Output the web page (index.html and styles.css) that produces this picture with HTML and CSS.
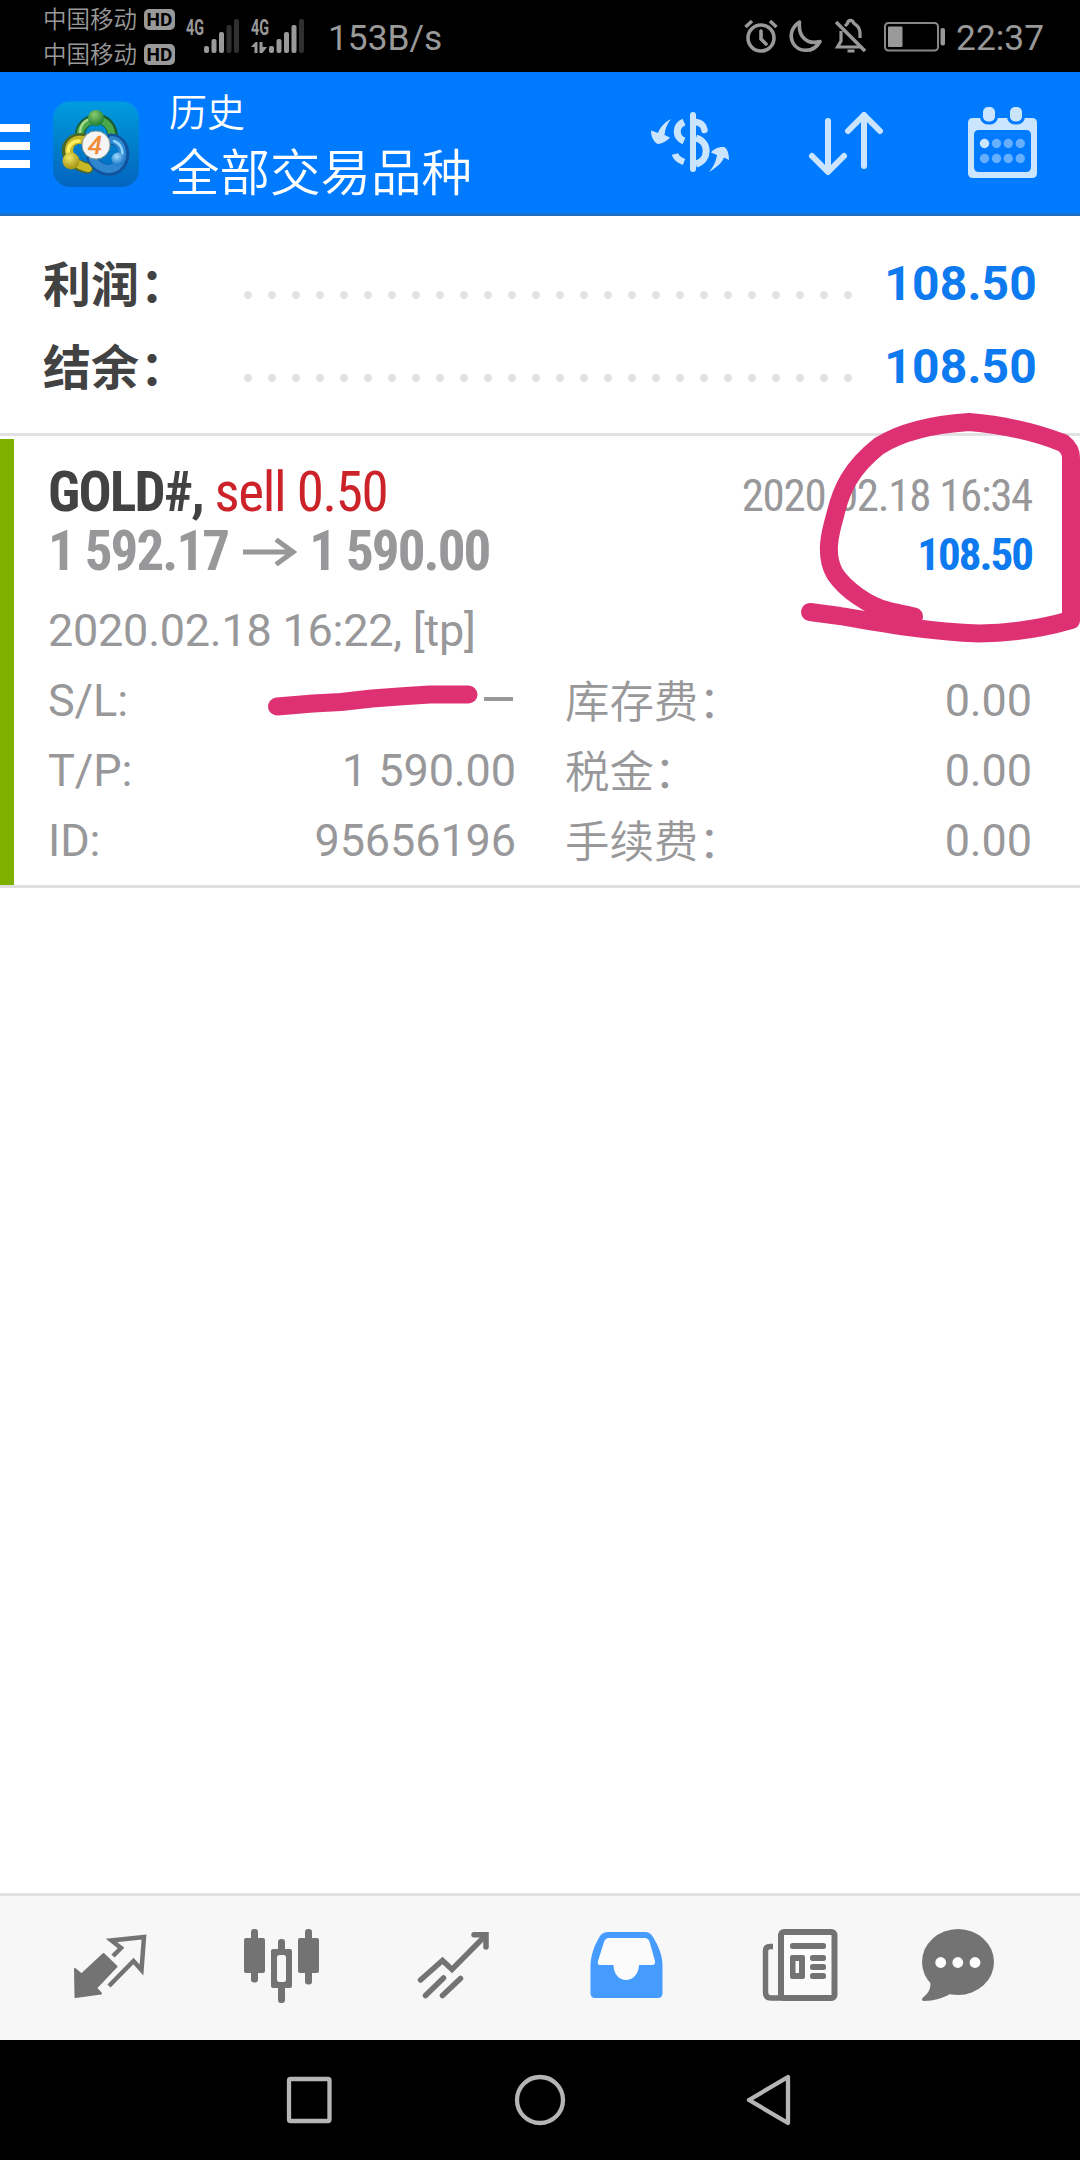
FILE: index.html
```html
<!DOCTYPE html>
<html lang="zh-CN">
<head>
    <meta charset="utf-8">
    <title>历史</title>
    <link rel="stylesheet" href="styles.css">
</head>

<body>
<div class="screen">
    <div class="status-bar">
        <div class="carriers">
            <div class="carrier">中国移动<span class="hd">HD</span></div>
            <div class="carrier">中国移动<span class="hd">HD</span></div>
        </div>
        <svg class="signal" width="56" height="48" viewBox="0 -6 56 48">
            <text class="net" x="1" y="17" textLength="18" lengthAdjust="spacingAndGlyphs">4G</text>
            <g fill="#999">
                <rect x="19" y="28" width="5" height="7" rx="2"/>
                <rect x="26.5" y="21" width="5" height="14" rx="2"/>
                <rect x="34" y="14" width="5" height="21" rx="2"/>
            </g>
            <g fill="#303030">
                <rect x="41.5" y="7" width="5" height="28" rx="2"/>
                <rect x="49" y="1" width="5" height="34" rx="2"/>
            </g>
        </svg>
        <svg class="signal" width="56" height="48" viewBox="0 -6 56 48">
            <text class="net" x="1" y="17" textLength="18" lengthAdjust="spacingAndGlyphs">4G</text>
            <path d="M1 29L5.500 24H7.500V35H4.500V29ZM9.500 24H12.500V29H17L12.500 35H9.500Z" fill="#999"/>
            <g fill="#999">
                <rect x="19" y="28" width="5" height="7" rx="2"/>
                <rect x="26.500" y="21" width="5" height="14" rx="2"/>
                <rect x="34" y="14" width="5" height="21" rx="2"/>
                <rect x="41.500" y="7" width="5" height="28" rx="2"/>
            </g>
            <rect x="49" y="1" width="5" height="34" rx="2" fill="#303030"/>
        </svg>
        <div class="speed">153B/s</div>
        <div class="status-right">
            <svg width="34" height="36" viewBox="0 0 34 36" fill="none" stroke="#999" stroke-width="3.600">
                <circle cx="17" cy="20" r="13"/>
                <path d="M17 13V21L22 26" stroke-linecap="round"/>
                <path d="M1.500 9L8 3M26 3L32.500 9"/>
            </svg>
            <svg width="34" height="36" viewBox="0 0 34 36" fill="none" stroke="#999" stroke-width="3.600" stroke-linejoin="round">
                <path d="M10.500 4C3 9 0 17 4 25C9 34 24 36 31 23.500C18 27 9 19 10.500 4Z"/>
            </svg>
            <svg width="34" height="36" viewBox="0 0 34 36" fill="none" stroke="#999" stroke-width="3.200">
                <path d="M7 13V23L3.500 29H27M11 8C13 6 14 6 14 3.500Q16.500 1.500 19 3.500C19 7 26 6 26 15V20"/>
                <path d="M2 4L31 33" stroke-width="3.600"/>
                <path d="M13.500 33H20.500" stroke-width="3"/>
            </svg>
            <svg width="62" height="36" viewBox="0 0 62 36">
                <rect x="1" y="5" width="53" height="27.500" rx="3.500" fill="none" stroke="#888" stroke-width="2"/>
                <rect x="4" y="8.500" width="14.500" height="20.500" rx="1" fill="#999"/>
                <rect x="56.500" y="10" width="4.500" height="17.500" rx="2" fill="#999"/>
            </svg>
            <div class="clock">22:37</div>
        </div>
    </div>

    <div class="header">
        <div class="menu"><i></i><i></i><i></i></div>
        <svg class="logo" width="88" height="88" viewBox="0 0 88 88">
            <defs>
                <linearGradient id="bg" x1="0" y1="0" x2="0" y2="1">
                    <stop offset="0" stop-color="#009ce0"/>
                    <stop offset="0.55" stop-color="#007cc9"/>
                    <stop offset="1" stop-color="#0464c0"/>
                </linearGradient>
                <radialGradient id="green" cx="0.4" cy="0.3" r="0.7">
                    <stop offset="0" stop-color="#8ccb70"/>
                    <stop offset="1" stop-color="#1d7d33"/>
                </radialGradient>
                <radialGradient id="yellow" cx="0.4" cy="0.3" r="0.7">
                    <stop offset="0" stop-color="#f3e566"/>
                    <stop offset="1" stop-color="#a0920e"/>
                </radialGradient>
                <radialGradient id="blue" cx="0.4" cy="0.3" r="0.7">
                    <stop offset="0" stop-color="#9fdcff"/>
                    <stop offset="1" stop-color="#1573c4"/>
                </radialGradient>
            </defs>
            <rect x="1" y="0.500" width="86" height="85.500" rx="17" fill="url(#bg)"/>
            <g fill="none" stroke-linecap="round">
                <path d="M28 37C25 15 62 8 61 39" stroke="#175d33" stroke-width="10"/>
                <path d="M28 36C26 16 61 10 60 38" stroke="#4aa84c" stroke-width="7"/>
                <path d="M28 33C28 20 37 17 43 18" stroke="#a5da8d" stroke-width="2.500"/>
                <path d="M32 38C12 34 6 62 36 67" stroke="#4b6a28" stroke-width="11"/>
                <path d="M31 39C13 36 10 61 36 67" stroke="#c9b825" stroke-width="8"/>
                <path d="M16 51C16 44 21 40 27 40" stroke="#fff060" stroke-width="3.500"/>
                <path d="M59 38C73 39 76 58 66 66C57 73 45 68 40 57" stroke="#12539d" stroke-width="11"/>
                <path d="M60 39C71 40 74 57 65 65C57 71 46 67 41 58" stroke="#2f86d0" stroke-width="8"/>
                <path d="M62 40C70 43 72 51 69 57" stroke="#92d5fa" stroke-width="2.500"/>
            </g>
            <circle cx="44" cy="17" r="8" fill="url(#green)"/>
            <circle cx="19" cy="60" r="8.500" fill="url(#yellow)"/>
            <circle cx="66" cy="58" r="6.500" fill="url(#blue)"/>
            <circle cx="44" cy="44" r="14" fill="#f5f5f5" stroke="#8b9b8f" stroke-width="1"/>
            <text class="logo-num" x="43" y="53">4</text>
        </svg>
        <div class="titles">
            <div class="title">历史</div>
            <div class="subtitle">全部交易品种</div>
        </div>
        <div class="actions">
            <svg width="100" height="80" viewBox="0 0 100 80">
                <g fill="none" stroke="#cce5ff">
                    <path d="M53 11V65" stroke-width="6" stroke-linecap="round"/>
                    <path d="M56 18C62 19 64 22 64.500 26" stroke-width="6.500" stroke-linecap="round"/>
                    <path d="M56 34C70 38 69 57 56 60" stroke-width="7"/>
                    <path d="M44 18C35 22 35 33 44 37" stroke-width="7"/>
                    <path d="M35 50C36 54 39 56 44 58" stroke-width="6.500"/>
                </g>
                <path d="M31 15C25 18 20 23 18 29L11 26.500C11 32 13 37 17.500 40C22 40 27 37 30 33.500L24.500 31C25 25 27 20 31 15ZM69 68C76 64 82 59 84 53.500L89 56C89 51 88 46 85 43.500C80 42 74 45 71 48.500L77 51C76 57 74 62 69 68Z" fill="#cce5ff"/>
            </svg>
            <svg width="100" height="80" viewBox="0 0 100 80" fill="none" stroke="#cce5ff" stroke-width="6" stroke-linecap="round" stroke-linejoin="round">
                <path d="M32 17V67M16 52L32 68L48 52"/>
                <path d="M68 62V11M52 27L68 11L84 27"/>
            </svg>
            <svg width="100" height="80" viewBox="0 0 100 80">
                <path d="M21 14H80Q85 14 85 19V69Q85 74 80 74H21Q16 74 16 69V19Q16 14 21 14ZM27 26Q22 26 22 31V63Q22 68 27 68H74Q79 68 79 63V31Q79 26 74 26Z" fill="#cce5ff" fill-rule="evenodd"/>
                <g fill="#cce5ff" stroke="#007aff" stroke-width="3">
                    <rect x="29.500" y="1.500" width="15" height="17.500" rx="6.500"/>
                    <rect x="56.500" y="1.500" width="15" height="17.500" rx="6.500"/>
                </g>
                <g fill="#66afff">
                    <circle cx="32.500" cy="39.500" r="4.700" fill="#cce5ff"/>
                    <circle cx="44.500" cy="39.500" r="4.700"/>
                    <circle cx="56.300" cy="39.500" r="4.700"/>
                    <circle cx="68.300" cy="39.500" r="4.700"/>
                    <circle cx="32.500" cy="54.500" r="4.700"/>
                    <circle cx="44.500" cy="54.500" r="4.700"/>
                    <circle cx="56.300" cy="54.500" r="4.700"/>
                    <circle cx="68.300" cy="54.500" r="4.700"/>
                </g>
            </svg>
        </div>
    </div>

    <div class="summary">
        <div class="summary-row">
            <span class="name">利润<span class="colon">：</span></span>
            <span class="dots"></span>
            <span class="sum">108.50</span>
        </div>
        <div class="summary-row">
            <span class="name">结余<span class="colon">：</span></span>
            <span class="dots"></span>
            <span class="sum">108.50</span>
        </div>
    </div>

    <div class="deal">
        <div class="deal-row">
            <div class="cond left"><b>GOLD#,</b> <span class="sell">sell 0.50</span></div>
            <div class="cond right time">2020.02.18 16:34</div>
        </div>
        <div class="deal-row prices">
            <div class="price-pair">
                <b class="price">1 592.17</b>
                <svg width="54" height="28" viewBox="0 0 54 28" fill="none" stroke="#98989a" stroke-width="5">
                    <path d="M0 14H50M33 1.500L50 14L33 26.500"/>
                </svg>
                <b class="price">1 590.00</b>
            </div>
            <div class="cond right profit">108.50</div>
        </div>
        <div class="info">2020.02.18 16:22, [tp]</div>
        <div class="details">
            <div class="detail"><span>S/L:</span><span class="dash"></span></div>
            <div class="detail"><span class="cn">库存费：</span><span>0.00</span></div>
            <div class="detail"><span>T/P:</span><span>1 590.00</span></div>
            <div class="detail"><span class="cn">税金：</span><span>0.00</span></div>
            <div class="detail"><span>ID:</span><span>95656196</span></div>
            <div class="detail"><span class="cn">手续费：</span><span>0.00</span></div>
        </div>
        <!-- marker strokes over the deal -->
        <svg class="marker" width="1080" height="240" viewBox="0 410 1080 240">
            <path d="M914 616.500C905 614 897 613 889 611C868 606 845 589 835 574C824 555 830 533 835.500 514C841 490 851 468 879 446C903 431 938 424 969 422C1005 425 1035 432 1063 443Q1071 449 1071 458V620C1040 629 1010 633 979 633.500C930 632 880 623 840 616L810 612"/>
        </svg>
        <svg class="marker strike" width="220" height="40" viewBox="260 680 220 40">
            <path d="M277 706.500L289 705.500L313 703.500L341 702L372 698.500L406 696L430 694.500H468.500"/>
        </svg>
    </div>

    <div class="tabs">
        <svg width="100" height="80" viewBox="60 1926 100 80">
            <path d="M75 1969L81.500 1974.500L103.500 1954L116.500 1966.500L96 1988L101 1993.500L75.500 1997Z" fill="#737373" stroke="#737373" stroke-width="2" stroke-linejoin="round"/>
            <path d="M113 1956L121 1948L111.500 1940.500L144 1937L141.500 1970L133.500 1961L109 1986" fill="none" stroke="#737373" stroke-width="4.500"/>
        </svg>
        <svg width="100" height="80" viewBox="232 1926 100 80" fill="#737373">
            <rect x="244" y="1938" width="21" height="35" rx="2"/>
            <rect x="251" y="1929" width="7" height="53.500" rx="3"/>
            <rect x="271" y="1949" width="21" height="39" rx="2"/>
            <rect x="278" y="1939" width="7" height="64" rx="3"/>
            <rect x="277" y="1955" width="9" height="27" rx="2.500" fill="#f7f7f7"/>
            <rect x="298" y="1938" width="21" height="35" rx="2"/>
            <rect x="305" y="1929" width="7" height="55.500" rx="3"/>
        </svg>
        <svg width="100" height="80" viewBox="404 1926 100 80" fill="none" stroke="#737373" stroke-width="5.500" stroke-linecap="round">
            <path d="M420.500 1980L442.500 1960.500L452 1969.500L485 1936"/>
            <path d="M474 1934.800H486V1947"/>
            <path d="M443.500 1978L425.500 1995.500M460.500 1978.500L442.500 1995.500"/>
        </svg>
        <svg width="100" height="80" viewBox="576 1926 100 80">
            <path d="M608 1932H645Q650 1932 653 1937C659 1947 662.500 1956 662.500 1966V1993Q662.500 1998 658 1998H595Q590.500 1998 590.500 1993V1966C590.500 1956 594 1946 600 1936Q603 1932 608 1932Z" fill="#469cfe"/>
            <path d="M609 1938H645Q648 1938 649.500 1941.500L655 1961Q655.500 1965 652 1965H639C638 1985 614 1985 613.500 1965H600Q597 1965 598 1961L604 1942Q605.500 1938 609 1938Z" fill="#fbfbfb"/>
        </svg>
        <svg width="100" height="80" viewBox="748 1926 100 80">
            <path d="M773 1946.500H770Q765.500 1946.500 765.500 1951V1992Q765.500 1998 771 1998H784" fill="none" stroke="#737373" stroke-width="5.500"/>
            <rect x="781" y="1932" width="53.500" height="66" rx="3" fill="#fbfbfb" stroke="#737373" stroke-width="6"/>
            <g fill="#737373">
                <rect x="790" y="1943" width="36" height="6" rx="2.500"/>
                <path d="M792 1955H803Q805 1955 805 1957V1977Q805 1979 803 1979H792Q790 1979 790 1977V1957Q790 1955 792 1955ZM795.500 1961V1973H799V1961Z" fill-rule="evenodd"/>
                <rect x="810" y="1955" width="16" height="6" rx="2.500"/>
                <rect x="810" y="1964" width="16" height="6" rx="2.500"/>
                <rect x="810" y="1973" width="16" height="6" rx="2.500"/>
            </g>
        </svg>
        <svg width="100" height="80" viewBox="920 1926 100 80">
            <ellipse cx="958" cy="1962" rx="36" ry="33" fill="#737373"/>
            <path d="M930 1980C932 1990 927 1994 922.500 1998Q921 2001 924 2001C934 2001 943 1998 950 1994Z" fill="#737373"/>
            <g fill="#fff">
                <circle cx="940.700" cy="1962.500" r="5.400"/>
                <circle cx="957.800" cy="1962.500" r="5.400"/>
                <circle cx="975" cy="1962.500" r="5.400"/>
            </g>
        </svg>
    </div>

    <div class="nav-bar">
        <svg width="60" height="60" viewBox="0 0 60 60"><rect x="10" y="9" width="40.500" height="42" rx="1.500"/></svg>
        <svg width="60" height="60" viewBox="0 0 60 60"><circle cx="30" cy="30" r="23"/></svg>
        <svg width="60" height="60" viewBox="0 0 60 60"><path d="M8 30L47 7V53Z"/></svg>
    </div>
</div>
</body>
</html>
```
FILE: styles.css
```css
body, html {
height: 100%;
margin: 0;
padding: 0;
}

.screen {
width: 1080px;
height: 2160px;
display: flex;
flex-direction: column;
background-color: #fff;
font-family: Roboto, "Noto Sans CJK SC", sans-serif;
overflow: hidden;
}

svg {
display: block;
flex: none;
}

.status-bar {
height: 72px;
box-sizing: border-box;
padding-left: 43px;
padding-right: 36px;
display: flex;
align-items: center;
background-color: #000;
color: #999;
}

.carriers {
width: 142px;
padding-top: 4px;
}

.carrier {
display: flex;
align-items: center;
height: 35px;
font-size: 23.5px;
font-weight: 350;
line-height: 35px;
white-space: nowrap;
}

.hd {
width: 31px;
height: 21px;
margin-left: 7px;
margin-bottom: 2px;
border-radius: 5px;
background-color: #999;
color: #000;
font-size: 19px;
font-weight: bold;
line-height: 21px;
text-align: center;
}

.signal {
margin-right: 9px;
}

.net {
fill: #999;
font-size: 22px;
font-weight: bold;
}

.speed {
margin-left: 13px;
font-size: 35.3px;
line-height: 72px;
padding-top: 4px;
}

.status-right {
margin-left: auto;
display: flex;
align-items: center;
gap: 11px;
}

.status-right svg:nth-child(4) {
margin-left: 5px;
margin-right: -1px;
}

.clock {
font-size: 35.3px;
line-height: 72px;
padding-top: 4px;
}

.header {
height: 144px;
box-sizing: border-box;
border-bottom: 3px solid #1a6fc4;
display: flex;
align-items: center;
background-color: #007aff;
color: #fff;
}

.menu {
width: 30px;
height: 44px;
margin-right: 22px;
padding-top: 7px;
display: flex;
flex-direction: column;
justify-content: space-between;
}

.menu i {
height: 8px;
background-color: #fff;
}

.logo {
margin-top: 5px;
}

.logo-num {
fill: #f08a35;
font-family: "Liberation Sans", sans-serif;
font-size: 25px;
font-style: italic;
text-anchor: middle;
stroke: #f08a35;
stroke-width: 0.6px;
}

.titles {
margin-left: 29px;
padding-top: 2px;
font-weight: 350;
}

.title {
font-size: 38px;
line-height: 59px;
}

.subtitle {
font-size: 50.5px;
line-height: 61px;
}

.actions {
margin-left: auto;
margin-right: 28px;
padding-top: 3px;
display: flex;
gap: 56px;
}

.summary {
height: 217px;
box-sizing: border-box;
padding: 26px 43px 0 43px;
border-bottom: 0;
}

.summary-row {
display: flex;
height: 83px;
line-height: 83px;
font-size: 48px;
font-weight: bold;
}

.name {
width: 201px;
padding-top: 2px;
color: #424242;
}

.colon {
margin-left: 1px;
}

.dots {
width: 624px;
height: 8px;
margin-top: 49px;
margin-left: -8px;
background-image: radial-gradient(circle, #e2e2e2 3.6px, transparent 4.4px);
background-size: 24px 8px;
}

.sum {
margin-left: auto;
letter-spacing: 0.2px;
color: #0d7af0;
}

.deal {
position: relative;
height: 455px;
box-sizing: border-box;
border-top: 3px solid #e2e2e4;
border-bottom: 3px solid #e0e0e0;
padding: 27px 48px 0 48px;
color: #98989a;
}

/* green bar on the left edge */
.deal::before {
content: "";
position: absolute;
left: 0;
top: 3px;
width: 14px;
height: 446px;
background-color: #7fb000;
}

.deal-row {
display: flex;
justify-content: space-between;
align-items: baseline;
height: 59px;
font-size: 55px;
line-height: 59px;
white-space: nowrap;
}

.cond {
font-family: "Roboto Condensed", Roboto, sans-serif;
font-stretch: 75%;
letter-spacing: -1.3px;
}

.deal b {
font-family: "Roboto Condensed", Roboto, sans-serif;
font-stretch: 75%;
}

.left b {
letter-spacing: -1.7px;
color: #424242;
}

.sell {
color: #cc2229;
}

.time {
font-size: 45px;
}

.profit {
font-size: 45px;
font-weight: bold;
letter-spacing: -2px;
color: #0d7af0;
}

.price-pair {
display: flex;
align-items: center;
}

.price {
letter-spacing: -1.9px;
}

.price-pair svg {
margin: 0 12px 0 15px;
}

.info {
height: 70px;
margin-top: 15px;
font-size: 45px;
letter-spacing: -0.25px;
line-height: 70px;
}

.details {
display: grid;
grid-template-columns: 468px 467px;
column-gap: 49px;
}

.detail {
display: flex;
justify-content: space-between;
height: 70px;
font-size: 45px;
letter-spacing: -0.1px;
line-height: 70px;
}

.cn {
padding-top: 2px;
font-size: 44.5px;
font-weight: 350;
}

.dash {
width: 29px;
height: 4px;
margin-top: 31px;
margin-right: 3px;
background-color: #98989a;
}

.marker {
position: absolute;
left: 0;
top: -26px;
fill: none;
stroke: #de3174;
stroke-width: 18px;
stroke-linecap: round;
stroke-linejoin: round;
}

.strike {
left: 260px;
top: 244px;
}

.tabs {
height: 147px;
box-sizing: border-box;
margin-top: auto;
padding-left: 60px;
padding-top: 30px;
border-top: 3px solid #e2e2e2;
background-color: #f7f7f7;
display: flex;
gap: 72px;
}

.nav-bar {
height: 120px;
display: flex;
justify-content: center;
align-items: center;
gap: 171px;
background-color: #000;
}

.nav-bar svg {
fill: none;
stroke: #b5b5b5;
stroke-width: 4.3px;
stroke-linejoin: round;
}
```
